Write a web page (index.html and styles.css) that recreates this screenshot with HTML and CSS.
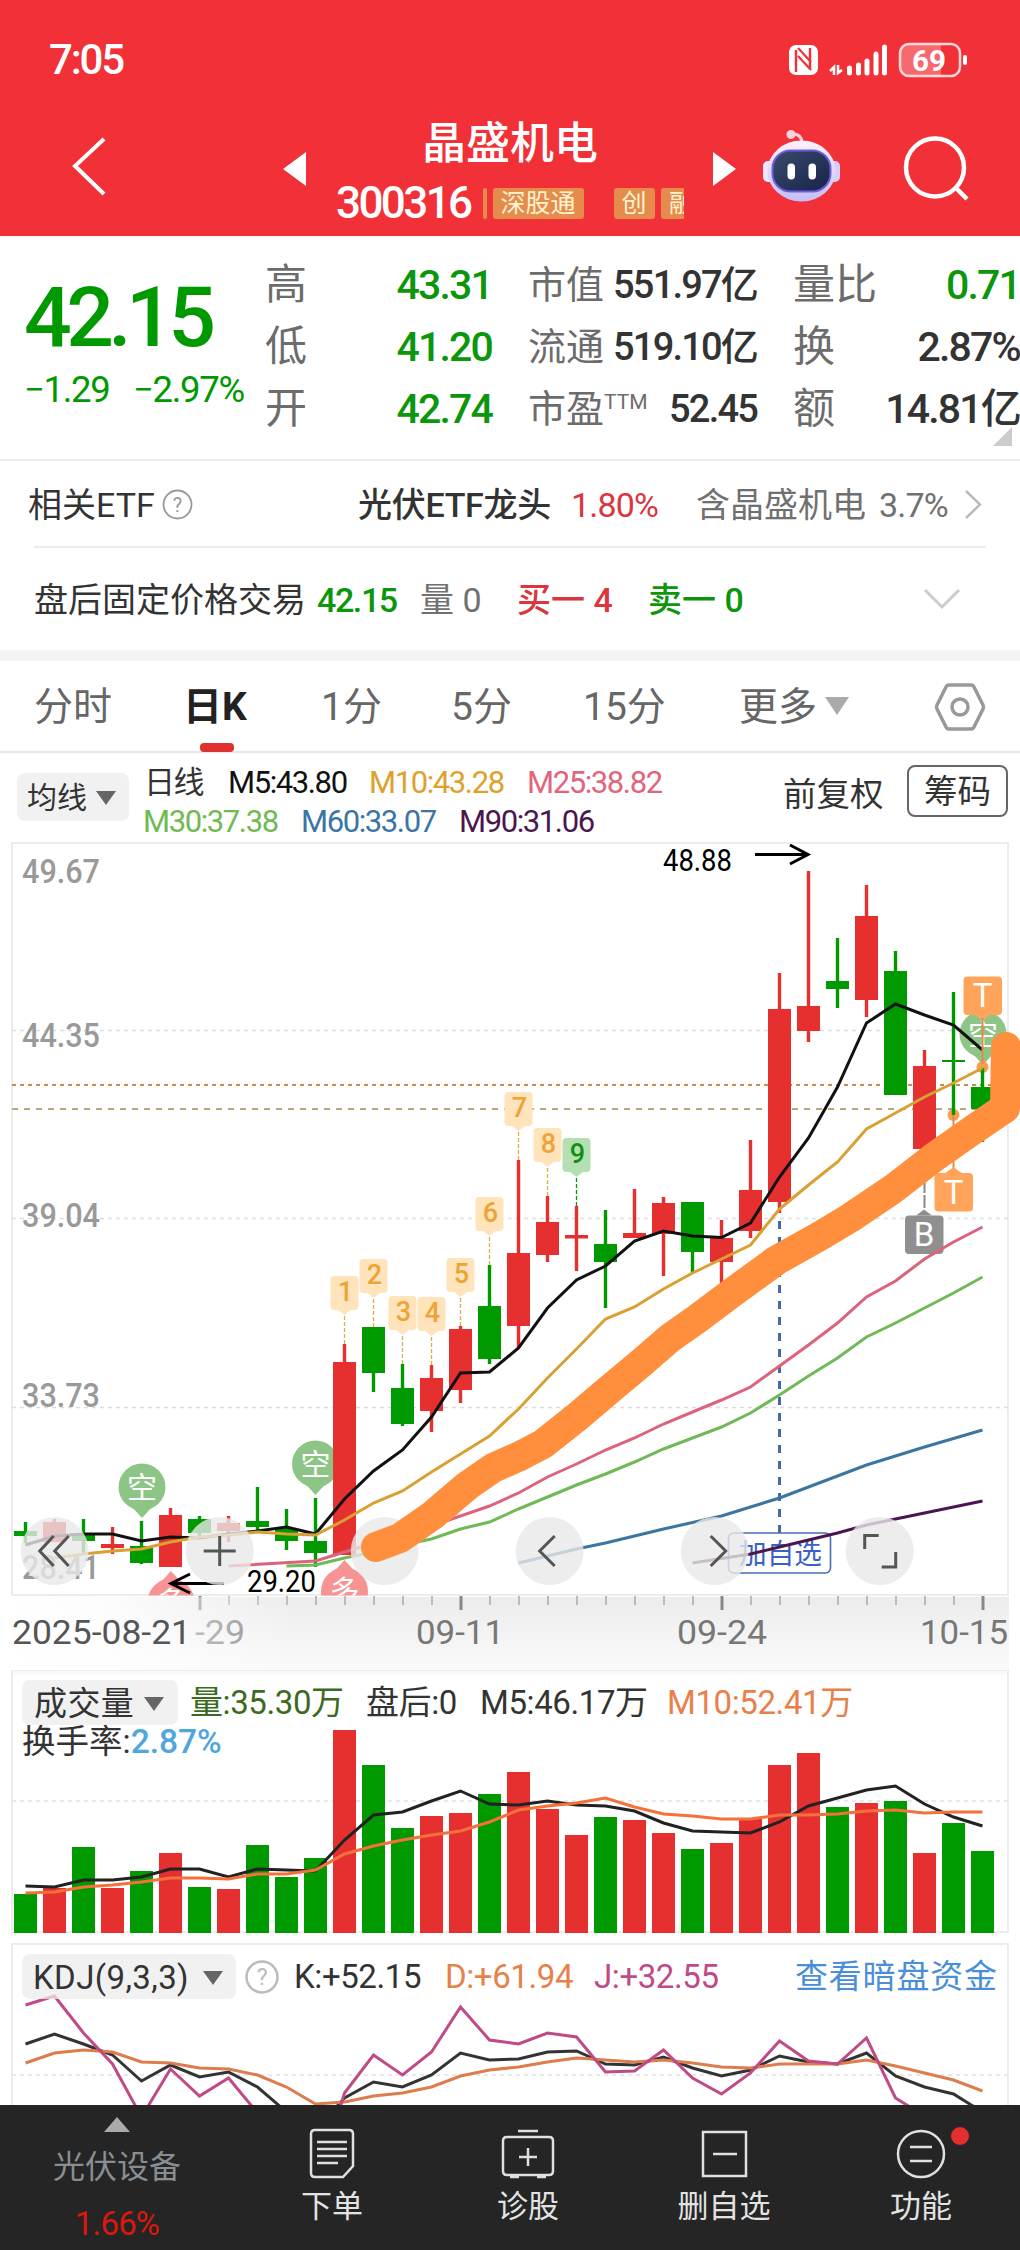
FILE: index.html
```html
<!DOCTYPE html>
<html lang="zh-CN">
<head>
    <meta charset="UTF-8">
    <meta name="viewport" content="width=device-width, initial-scale=1.0">
    <title>晶盛机电 300316</title>
    <link rel="stylesheet" href="styles.css">
</head>
<body>

    <header class="header">
        <div class="status">
            <span class="clock">7:05</span>
            <svg class="status-icons" width="182" height="38" viewBox="788 40 182 38">
                <rect x="789" y="44" width="29" height="30" rx="7" fill="#fff"/>
                <path d="M796 49v22M810 47v21" stroke="#f13037" stroke-width="2.4" fill="none"/>
                <path d="M798 47l13 14M798 55l13 14" stroke="#f13037" stroke-width="2.2" fill="none"/>
                <path d="M830 70l4-4v8M838 64v8l4-3" stroke="#fff" stroke-width="2.5" fill="none"/>
                <path d="M849.500 67v5M858.500 64v8M867 60v12M876 53v19M884.500 46v26" stroke="#fff" stroke-width="5" stroke-linecap="round"/>
                <path d="M907 43h34v32h-34q-7 0-7-7V50q0-7 7-7z" fill="#f66a6f"/>
                <rect x="900" y="43" width="60" height="32" rx="9" fill="none" stroke="#ffd9da" stroke-width="2.500"/>
                <rect x="963" y="54" width="4" height="10" rx="2" fill="#fff"/>
                <text x="912" y="70" font-size="30" font-weight="700" fill="#fff" textLength="34" lengthAdjust="spacingAndGlyphs">69</text>
            </svg>
        </div>
        <div class="titlebar">
            <svg class="back" width="36" height="62" viewBox="0 0 36 62"><path d="M33 3L4 30l29 28" fill="none" stroke="#fff" stroke-width="4"/></svg>
            <svg class="prev" width="23" height="34" viewBox="0 0 23 34"><path d="M0 17L23 0v34z" fill="#fff"/></svg>
            <div class="stock">
                <h1>晶盛机电</h1>
                <div class="code-row">
                    <span class="code">300316</span>
                    <div class="tags">
                        <i class="tag-edge"></i>
                        <span class="tag tag-wide">深股通</span>
                        <span class="tag tag-board">创</span>
                        <span class="tag tag-cut">融</span>
                    </div>
                </div>
            </div>
            <svg class="next" width="23" height="34" viewBox="0 0 23 34"><path d="M23 17L0 0v34z" fill="#fff"/></svg>
            <svg class="robot" width="78" height="74" viewBox="762 129 78 74">
                <defs>
                    <linearGradient id="shell" x1="0" y1="0" x2="0" y2="1"><stop offset="0" stop-color="#fff0fa"/><stop offset="1" stop-color="#c5bdf5"/></linearGradient>
                    <linearGradient id="face" x1="0" y1="0" x2="1" y2="1"><stop offset="0" stop-color="#3b4a6e"/><stop offset="1" stop-color="#17234a"/></linearGradient>
                </defs>
                <path d="M791 134q10-1 11 8" stroke="#fccfdc" stroke-width="3" fill="none"/>
                <circle cx="791" cy="134.500" r="4.500" fill="#fccfdc"/>
                <rect x="763" y="161" width="12" height="21" rx="5" fill="#efe6fd"/>
                <rect x="828" y="161" width="12" height="21" rx="5" fill="#d6cef8"/>
                <ellipse cx="801.500" cy="171" rx="34" ry="30.500" fill="url(#shell)"/>
                <rect x="772.500" y="150.500" width="58" height="41" rx="18" fill="url(#face)" stroke="#6b5fd8" stroke-width="2"/>
                <rect x="787.500" y="163.500" width="7.500" height="16" rx="3.700" fill="#fff"/>
                <rect x="808.500" y="163.500" width="7.500" height="16" rx="3.700" fill="#fff"/>
            </svg>
            <svg class="search" width="68" height="66" viewBox="902 135 68 66"><circle cx="935" cy="167.500" r="29" fill="none" stroke="#fff" stroke-width="4.500"/><path d="M955 187l12 12" stroke="#fff" stroke-width="4.500"/></svg>
        </div>
    </header>

    <section class="quote">
        <div class="price">
            <div class="price-now">42.15</div>
            <div class="price-diff"><span>−1.29</span><span>−2.97%</span></div>
        </div>
        <dl class="stats stats-price">
            <dt>高</dt><dd>43.31</dd>
            <dt>低</dt><dd>41.20</dd>
            <dt>开</dt><dd>42.74</dd>
        </dl>
        <dl class="stats stats-cap">
            <dt>市值</dt><dd>551.97亿</dd>
            <dt>流通</dt><dd>519.10亿</dd>
            <dt>市盈<sup>TTM</sup></dt><dd>52.45</dd>
        </dl>
        <dl class="stats stats-vol">
            <dt>量比</dt><dd class="down">0.71</dd>
            <dt>换</dt><dd>2.87%</dd>
            <dt>额</dt><dd>14.81亿</dd>
        </dl>
        <i class="corner"></i>
    </section>

    <section class="etf">
        <span>相关ETF</span>
        <svg width="31" height="31" viewBox="0 0 31 31"><circle cx="15.500" cy="15.500" r="14" fill="none" stroke="#999" stroke-width="1.800"/><text x="15.500" y="22.500" font-size="20" fill="#999" text-anchor="middle">?</text></svg>
        <b>光伏ETF龙头</b>
        <span class="up">1.80%</span>
        <span class="muted">含晶盛机电</span>
        <span class="muted num">3.7%</span>
        <svg width="20" height="31" viewBox="0 0 20 31"><path d="M2 2l14 13.500L2 29" fill="none" stroke="#bbb" stroke-width="2.500"/></svg>
    </section>

    <section class="after-hours">
        <span>盘后固定价格交易</span>
        <span class="down strong">42.15</span>
        <span class="muted">量 0</span>
        <span class="up medium">买一 4</span>
        <span class="down medium">卖一 0</span>
        <svg width="38" height="24" viewBox="0 0 38 24"><path d="M2 2l17 17L36 2" fill="none" stroke="#ccc" stroke-width="3"/></svg>
    </section>

    <nav class="tabs">
        <span>分时</span>
        <span class="active">日K</span>
        <span>1分</span>
        <span>5分</span>
        <span>15分</span>
        <span>更多<i class="caret"></i></span>
        <svg width="52" height="50" viewBox="0 0 52 50"><path d="M15 3h22q2 0 3 2l9 18q1 2 0 4l-9 18q-1 2-3 2H15q-2 0-3-2L3 27q-1-2 0-4l9-18q1-2 3-2z" fill="none" stroke="#999" stroke-width="3.500"/><circle cx="26" cy="25" r="8" fill="none" stroke="#999" stroke-width="3.500"/></svg>
    </nav>

    <section class="averages">
        <span class="pill">均线<i class="caret"></i></span>
        <div class="ma-list">
            <div class="ma-line ma-first"><span>日线</span><span class="m5">M5:43.80</span><span class="m10">M10:43.28</span><span class="m25">M25:38.82</span></div>
            <div class="ma-line ma-second"><span class="m30">M30:37.38</span><span class="m60">M60:33.07</span><span class="m90">M90:31.06</span></div>
        </div>
        <span class="adjust">前复权</span>
        <span class="chips">筹码</span>
    </section>

    <svg class="kline" id="kline" width="1020" height="828" viewBox="0 842 1020 828">
        <defs>
            <linearGradient id="axisShade" x1="0" y1="0" x2="0" y2="1"><stop offset="0" stop-color="#ececec"/><stop offset="1" stop-color="#fbfbfb"/></linearGradient>
            <linearGradient id="axisFade" x1="0" y1="0" x2="1" y2="0"><stop offset="0" stop-color="#fff"/><stop offset=".35" stop-color="#fff" stop-opacity=".85"/><stop offset="1" stop-color="#fff" stop-opacity="0"/></linearGradient>
            <clipPath id="plot"><rect x="12" y="843" width="1008" height="752.500"/></clipPath>
        </defs>
    </svg>

    <section class="panel volume">
        <svg id="volume" width="1020" height="270" viewBox="0 1670 1020 270"></svg>
        <div class="panel-head">
            <div class="legend volume-legend">
                <span class="pill">成交量<i class="caret"></i></span>
                <span class="vol-now">量:35.30万</span><span>盘后:0</span><span>M5:46.17万</span><span class="orange">M10:52.41万</span>
            </div>
            <div class="turnover">换手率:<span>2.87%</span></div>
        </div>
    </section>

    <section class="panel kdj">
        <svg id="kdj" width="1020" height="165" viewBox="0 1940 1020 165"></svg>
        <div class="panel-head">
            <div class="legend kdj-legend">
                <span class="pill">KDJ(9,3,3)<i class="caret"></i></span>
                <svg width="34" height="34" viewBox="0 0 34 34"><circle cx="17" cy="17" r="15.500" fill="none" stroke="#bbb" stroke-width="2.500"/><text x="17" y="25" font-size="23" fill="#bbb" text-anchor="middle">?</text></svg>
                <span>K:+52.15</span><span class="orange">D:+61.94</span><span class="magenta">J:+32.55</span><a class="link">查看暗盘资金</a>
            </div>
        </div>
    </section>

    <footer class="bottom-nav">
        <div class="sector">
            <i class="up-caret"></i>
            <span>光伏设备</span>
            <em>1.66%</em>
        </div>
        <div class="nav-item">
            <svg width="50" height="52" viewBox="0 0 50 52"><path d="M8 2h34q4 0 4 4v32l-10 11H8q-4 0-4-4V6q0-4 4-4zM10 14h30M10 21h30M10 28h30M10 35h21"/></svg>
            <span>下单</span>
        </div>
        <div class="nav-item">
            <svg width="54" height="52" viewBox="0 0 54 52"><path d="M17 3h20M6 9h42q4 0 4 4v30q0 4-4 4H6q-4 0-4-4V13q0-4 4-4zM27 20v18M18 29h18M9 49h9M36 49h9"/></svg>
            <span>诊股</span>
        </div>
        <div class="nav-item">
            <svg width="50" height="52" viewBox="0 0 50 52"><path d="M4 4h43v44H4zM14 26h24"/></svg>
            <span>删自选</span>
        </div>
        <div class="nav-item">
            <svg width="50" height="52" viewBox="0 0 50 52"><circle cx="25" cy="26" r="23"/><path d="M14 19h22M14 33h22"/></svg>
            <span>功能</span>
            <i class="dot"></i>
        </div>
    </footer>

    <script src="script.js"></script>
</body>
</html>
```
FILE: styles.css
```css
* {
    margin: 0;
    padding: 0;
    box-sizing: border-box;
}

body {
    width: 1020px;
    height: 2250px;
    overflow: hidden;
    background-color: #fff;
    color: #333;
    font-family: Roboto, "Noto Sans CJK SC", sans-serif;
    font-size: 34px;
    line-height: 1;
    white-space: nowrap;
}

svg {
    display: block;
    flex-shrink: 0;
}

i, em {
    font-style: normal;
}

.up {
    color: #d9363e;
}

.down {
    color: #0b960b;
}

.muted {
    color: #707070;
}

.caret {
    display: inline-block;
    border: 10px solid transparent;
    border-top: 14px solid #666;
    border-bottom: 0;
}

.pill {
    display: flex;
    align-items: center;
    background-color: #f1f1f1;
    border-radius: 8px;
}

/* header */
.header {
    height: 236px;
    background-color: #f13037;
    color: #fff;
}

.status {
    display: flex;
    justify-content: space-between;
    align-items: center;
    height: 120px;
    padding: 0 50px 0 49px;
}

.clock {
    font-size: 42px;
    font-weight: 500;
    letter-spacing: -2.2px;
}

.titlebar {
    display: grid;
    grid-template-columns: 71px 213px 52px 377px 50px 139px 118px;
    height: 116px;
}

.back {
    grid-column: 2;
    margin-top: 16px;
}

.prev {
    grid-column: 3;
    margin: 32px 0 0 -1px;
}

.stock {
    grid-column: 4;
    margin-right: 29px;
}

.stock h1 {
    padding-top: 2px;
    font-size: 44px;
    font-weight: 500;
    text-align: center;
}

.code-row {
    display: flex;
    align-items: center;
    height: 34px;
    margin-top: 20px;
}

.code {
    width: 147px;
    font-size: 44px;
    font-weight: 500;
    letter-spacing: -2.6px;
}

.tags {
    display: flex;
    width: 202px;
    overflow: hidden;
    font-size: 25px;
    line-height: 31px;
    color: #fff3d0;
}

.tag, .tag-edge {
    flex-shrink: 0;
    height: 31px;
    background-color: #e58c4c;
    border-radius: 3px;
    text-align: center;
}

.tag-edge {
    width: 4px;
    margin-right: 6px;
}

.tag-wide {
    width: 91px;
}

.tag-board {
    width: 41px;
    margin: 0 6px 0 30px;
}

.tag-cut {
    width: 42px;
}

.next {
    margin-top: 32px;
}

.robot {
    margin-top: 9px;
    margin-left: -1px;
}

.search {
    margin-top: 15px;
}

/* quote */
.quote {
    position: relative;
    display: grid;
    grid-template-columns: 241px 227px 36px 229px 36px 227px;
    height: 225px;
    padding-left: 24px;
    border-bottom: 2px solid #ebebeb;
}

.price {
    color: #009900;
}

.price-now {
    margin-top: 40px;
    font-size: 84px;
    font-weight: 500;
    letter-spacing: -5.6px;
}

.price-diff {
    display: grid;
    grid-template-columns: 109px auto;
    margin-top: 12px;
    font-size: 36.500px;
    letter-spacing: -1.3px;
}

.stats {
    display: grid;
    grid-template-columns: 84px 1fr;
    grid-auto-rows: 62px;
    align-items: center;
    margin-top: 18px;
    font-size: 42px;
}

.stats dt {
    color: #6c6c6c;
}

.stats dd {
    text-align: right;
    font-weight: 500;
    font-size: 41px;
    letter-spacing: -1.8px;
}

.stats-price {
    grid-column: 2;
}

.stats-price dd {
    color: #0b960b;
}

.stats-cap {
    grid-column: 4;
}

.stats-cap dt,
.stats-cap dd {
    font-size: 38px;
}

.stats-cap sup {
    font-size: 21px;
    vertical-align: 13px;
    line-height: 0;
}

.stats-vol {
    grid-column: 6;
}

.corner {
    position: absolute;
    right: 8px;
    bottom: 13px;
    border-left: 19px solid transparent;
    border-bottom: 19px solid #ccc;
}

/* related etf, after hours */
.etf {
    display: grid;
    grid-template-columns: 132px 197px 208px 125px 183px 89px 20px;
    align-items: center;
    height: 87px;
    margin: 0 34px;
    padding-top: 2px;
    border-bottom: 2px solid #ebebeb;
}

.etf > :first-child {
    margin-left: -6px;
}

.etf > svg {
    margin-left: -4px;
}

.etf b {
    margin-left: -5px;
    font-weight: 500;
    letter-spacing: -0.3px;
}

.etf .up,
.etf .num {
    letter-spacing: -0.8px;
}

.after-hours {
    display: grid;
    grid-template-columns: 283px 103px 97px 131px 275px 38px;
    align-items: center;
    height: 102px;
    padding: 2px 0 0 34px;
}

.strong {
    font-weight: 500;
    letter-spacing: -1.4px;
}

.medium {
    font-weight: 500;
}

/* period tabs */
.tabs {
    display: grid;
    grid-template-columns: 151px 136px 130px 132px 156px 195px 52px;
    align-items: center;
    height: 103px;
    padding: 2px 0 0 34px;
    border-top: 11px solid #f4f4f4;
    border-bottom: 2px solid #e6e6e6;
    font-size: 39px;
    color: #666;
}

.tabs .active {
    position: relative;
    margin-left: -2px;
    color: #222;
    font-weight: 700;
}

.tabs .active::after {
    content: "";
    position: absolute;
    left: 17px;
    bottom: -25px;
    width: 34px;
    height: 9px;
    border-radius: 4px;
    background-color: #e03131;
}

.tabs .caret {
    margin-left: 8px;
    border-width: 18px 12px 0;
    border-top-color: #aaa;
    vertical-align: 5px;
}

/* moving averages */
.averages {
    display: grid;
    grid-template-columns: 127px 639px 124px 96px;
    height: 89px;
    padding-left: 17px;
}

.averages .pill {
    width: 112px;
    height: 48px;
    margin-top: 20px;
    padding: 2px 0 0 10px;
    font-size: 30px;
}

.averages .caret {
    margin-left: 9px;
}

.ma-line {
    display: grid;
    height: 39px;
    align-items: center;
    font-size: 31px;
    letter-spacing: -1.400px;
}

.ma-first {
    margin-top: 10px;
    grid-template-columns: 84px 141px 158px 150px;
}

.ma-second {
    margin-left: -1px;
    grid-template-columns: 158px 158px 150px;
}

.m5 { color: #111; }
.m10 { color: #dda12c; }
.m25 { color: #e2657b; }
.m30 { color: #6fba52; }
.m60 { color: #3a75a3; }
.m90 { color: #4b1650; }

.adjust {
    margin-top: 25px;
    font-size: 33.500px;
}

.chips {
    width: 101px;
    height: 52px;
    margin-top: 12px;
    border: 2px solid #666;
    border-radius: 8px;
    font-size: 33.500px;
    line-height: 49px;
    text-align: center;
}

/* charts */
.kline text {
    font-family: Roboto, "Noto Sans CJK SC", sans-serif;
}

.axis-label {
    font-size: 34px;
    font-weight: 500;
    fill: #999;
}

.panel {
    display: grid;
}

.panel > * {
    grid-area: 1 / 1;
}

.legend {
    display: grid;
    align-items: center;
    font-size: 33px;
}

.volume-legend {
    grid-template-columns: 168px 176px 114px 187px auto;
    height: 45px;
    margin: 10px 0 0 22px;
    letter-spacing: -0.4px;
}

.volume-legend .pill {
    width: 156px;
    height: 45px;
    padding: 2px 0 0 12px;
    letter-spacing: 0.4px;
}

.volume-legend .caret {
    margin-left: 10px;
}

.kdj-legend .caret {
    margin-left: 14px;
}

.vol-now {
    color: #3c6a1e;
}

.orange {
    color: #e8804a;
}

.magenta {
    color: #c04a85;
}

.turnover {
    margin-left: 22px;
    font-size: 33.500px;
}

.turnover span {
    color: #4fa6dc;
    font-weight: 500;
}

.kdj-legend {
    grid-template-columns: 223px 49px 151px 149px 201px auto;
    height: 45px;
    margin: 14px 0 0 22px;
    letter-spacing: -0.4px;
}

.kdj-legend .pill {
    width: 214px;
    height: 45px;
    padding: 2px 0 0 11px;
    background-color: rgba(236, 236, 236, 0.75);
    letter-spacing: 0.4px;
}

.link {
    color: #4a8ed8;
    letter-spacing: 0.8px;
}

/* bottom bar */
.bottom-nav {
    display: grid;
    grid-template-columns: 234px 196px 196px 196px 198px;
    height: 145px;
    background-color: #252525;
    color: #e3e3e3;
    font-size: 31px;
}

.sector {
    display: flex;
    flex-direction: column;
    align-items: center;
    color: #888e92;
}

.sector span {
    margin-top: 19px;
    font-size: 32px;
}

.sector em {
    margin-top: 24px;
    color: #d9190f;
    font-size: 33px;
    letter-spacing: -0.8px;
}

.up-caret {
    margin-top: 12px;
    border: 13px solid transparent;
    border-top: 0;
    border-bottom: 15px solid #aaa;
}

.nav-item {
    position: relative;
    display: flex;
    flex-direction: column;
    align-items: center;
    padding-top: 23px;
}

.nav-item svg {
    fill: none;
    stroke: #e0e0e0;
    stroke-width: 2.500;
}

.nav-item span {
    margin-top: 11px;
}

.dot {
    position: absolute;
    left: 129px;
    top: 22px;
    width: 18px;
    height: 18px;
    border-radius: 50%;
    background-color: #e62e2e;
}
```
FILE: script.js
```js
const RED = '#e63030';
const GREEN = '#009900';
const STEP = 29;
const X0 = 25.5;
const x = i => X0 + STEP * i;

// [up, high, body top, body bottom, low, volume top]
const candles = [
    [0, 1522, 1531, 1536, 1543, 1894], [1, 1519, 1522, 1542, 1542, 1888], [0, 1519, 1534, 1541, 1553, 1847],
    [1, 1527, 1544, 1548, 1554, 1888], [0, 1521, 1546, 1563, 1564, 1871], [1, 1508, 1515, 1567, 1567, 1853],
    [0, 1516, 1519, 1533, 1537, 1887], [1, 1516, 1523, 1531, 1542, 1889], [0, 1487, 1521, 1527, 1533, 1845],
    [0, 1509, 1529, 1541, 1550, 1877], [0, 1498, 1541, 1553, 1567, 1858], [1, 1344, 1362, 1555, 1555, 1730],
    [0, 1327, 1327, 1373, 1392, 1765], [0, 1364, 1388, 1424, 1426, 1828], [1, 1365, 1378, 1411, 1432, 1816],
    [1, 1326, 1329, 1390, 1403, 1813], [0, 1265, 1306, 1359, 1364, 1794], [1, 1160, 1253, 1326, 1348, 1772],
    [1, 1196, 1222, 1255, 1262, 1809], [1, 1206, 1235, 1238.5, 1271, 1835], [0, 1210, 1244, 1262, 1308, 1817],
    [1, 1189, 1233, 1238, 1238, 1820], [1, 1197, 1203, 1234, 1276, 1833], [0, 1202, 1202, 1252, 1273, 1849],
    [1, 1220, 1238, 1262, 1283, 1843], [1, 1140, 1190, 1231, 1238, 1819], [1, 973, 1009, 1202, 1213, 1765],
    [1, 871, 1006, 1031, 1042, 1753], [0, 938, 981, 989, 1008, 1807], [1, 885, 916, 1000, 1017, 1803],
    [0, 951, 971, 1095, 1095, 1801], [1, 1050, 1066, 1149, 1160, 1853], [0, 992, 1060, 1062, 1115, 1823],
    [0, 1068, 1087, 1109, 1142, 1851]
];

// moving averages: [color, first index, y values (null = straight through)]
const averages = [
    ['#111', 0, [1545, 1536, 1534, 1534, 1541, 1537, 1538, 1534, 1531, 1527, 1534, 1499, 1471, 1450, 1417, 1373, 1372, 1348, 1308, 1280, 1266, 1241, 1231, 1236, 1237.5, 1223, 1177, 1138, 1087, 1023, 1004, 1015, 1025, 1050]],
    ['#d9a033', 1, [1558, 1554, 1551, 1549, 1542, 1537, 1535, 1532, 1534, 1535, 1520, 1503, 1491, 1472, 1454, 1436, 1409, 1378, 1349, 1319, 1307, 1289, 1273, 1259, 1245, 1209, 1185, 1162, 1129, 1113, 1097, 1083, 1068]],
    ['#dc637b', 7, [1566, null, null, 1561, 1552, 1543, null, 1526, null, 1506, 1493, 1477, 1464, 1450, 1438, 1424, 1412, 1400, 1387, 1366, 1345, 1323, 1297, 1281, 1259, 1242, 1227]],
    ['#70b957', 9, [1566, 1565, 1558, 1552, 1545, 1539, 1529, 1522, 1509, 1497, 1485, 1474, 1462, 1449, 1438, 1427, 1413, 1395, 1376, 1358, 1337, 1323, 1308, 1293, 1277]],
    ['#3c75a0', 17, [1563, null, 1549, 1543, null, 1529, null, 1516, 1507, 1498, 1487, 1476, 1465, null, 1447, null, 1430]],
    ['#4b1650', 23, [1563, null, 1554, 1547, 1540, 1533, 1525, null, 1513, null, 1501]]
];

const volumeM5 = [1886, 1887, 1880, 1880, 1877, 1869, 1869, 1877, 1869, 1870, 1871, 1840, 1815, 1812, 1801, 1791, 1804, 1805, 1801, 1805, 1806, 1811, 1823, 1831, 1832, 1833, 1822, 1806, 1798, 1790, 1786, 1804, 1817, 1826];
const volumeM10 = [1893, 1892, 1887, 1885, 1882, 1878, 1878, 1879, 1874, 1874, 1870, 1854, 1846, 1840, 1835, 1831, 1822, 1810, 1806, 1803, 1798, 1807, 1814, 1816, 1819, 1819, 1815, 1815, 1814, 1811, 1810, 1813, 1812, 1812];

const kdjK = [2044, 2034, 2044, 2055, 2081, 2065, 2077, 2072, 2087, 2112, 2130, 2098, 2082, 2087, 2075, 2053, 2060, 2059, 2052, 2051, 2064, 2065, 2057, 2068, 2076, 2070, 2056, 2062, 2064, 2053, 2076, 2087, 2094, 2112];
const kdjD = [2063, 2053, 2050, 2052, 2062, 2063, 2068, 2069, 2075, 2087, 2104, 2102, 2096, 2093, 2087, 2076, 2070, 2067, 2062, 2058, 2060, 2062, 2060, 2063, 2067, 2068, 2064, 2064, 2064, 2060, 2066, 2073, 2080, 2091];
const kdjJ = [2005, 1996, 2033, 2064, 2117, 2069, 2096, 2078, 2113, 2160, 2190, 2093, 2055, 2075, 2052, 2007, 2040, 2044, 2033, 2037, 2072, 2071, 2050, 2078, 2094, 2073, 2041, 2061, 2064, 2038, 2098, 2116, 2130, 2150];

// free-hand trend drawing
const trend = [[376, 1547], [400, 1538], [433, 1515], [467, 1486], [493, 1468], [520, 1456], [543, 1444], [577, 1417], [610, 1389], [640, 1364], [670, 1338], [697, 1319], [733, 1292], [777, 1260], [820, 1236], [850, 1218], [893, 1189], [933, 1158], [967, 1134], [1005, 1108], [1006, 1047]];

const rect = (rx, ry, w, h, fill, extra = '') => `<rect x="${rx}" y="${ry}" width="${w}" height="${h}" fill="${fill}" ${extra}/>`;
const path = (d, stroke, width = 3, extra = '') => `<path d="${d}" fill="none" stroke="${stroke}" stroke-width="${width}" ${extra}/>`;
const text = (tx, ty, str, width, size, fill, extra = '') =>
    `<text x="${tx}" y="${ty}" font-size="${size}" fill="${fill}" textLength="${width}" lengthAdjust="spacingAndGlyphs" ${extra}>${str}</text>`;

function line(values, color, start = 0, width = 3) {
    const points = values.map((v, i) => v === null ? '' : `${x(start + i)},${v}`).join(' ');
    return `<polyline points="${points}" fill="none" stroke="${color}" stroke-width="${width}"/>`;
}

function frame(top, height) {
    return `<rect x="12" y="${top}" width="996" height="${height}" fill="none" stroke="#ececec" stroke-width="2"/>`;
}

// round long/short signal marker
function pin(cx, cy, up, label) {
    const fill = up ? '#f79393' : '#8cc586';
    const d = up ? -1 : 1;
    return `<circle cx="${cx}" cy="${cy}" r="23.5" fill="${fill}"/>
        <path d="M${cx - 10} ${cy + 20 * d}L${cx} ${cy + 31 * d}L${cx + 10} ${cy + 20 * d}z" fill="${fill}"/>
        <text x="${cx}" y="${cy + 11}" font-size="30" fill="#fff" text-anchor="middle">${label}</text>`;
}

function tradeMark(left, top, color, label, d) {
    const cx = left + 19;
    const edge = d > 0 ? top + 38 : top;
    return rect(left, top, 38.5, 38.5, color, 'rx="4"') +
        `<path d="M${cx - 8} ${edge}L${cx} ${edge + 6 * d}L${cx + 8} ${edge}z" fill="${color}"/>
        <text x="${cx}" y="${top + 30.5}" font-size="33" fill="#fff" text-anchor="middle">${label}</text>`;
}

function drawKline() {
    let s = '';

    // date axis
    s += rect(12, 1597, 997, 78, 'url(#axisShade)');
    for (let i = 6; i < 34; i++) {
        const major = [6, 15, 24, 33].includes(i);
        s += path(`M${x(i) + 0.5} 1596v${major ? 14 : 9}`, major ? '#888' : '#bbb', major ? 3 : 2);
    }
    s += text(195, 1644, '-29', 50, 34, '#888');
    s += rect(0, 1597, 300, 73, 'url(#axisFade)');
    s += text(12, 1644, '2025-08-21', 179, 34, '#555');
    s += text(416, 1644, '09-11', 88, 34, '#777');
    s += text(677, 1644, '09-24', 90, 34, '#777');
    s += text(920, 1644, '10-15', 88, 34, '#777');

    s += frame(843, 752);
    [1030.5, 1218.5, 1407.5].forEach(y => s += path(`M12 ${y}H1008`, '#ddd', 1.3, 'stroke-dasharray="4 4"'));
    [['49.67', 883], ['44.35', 1047], ['39.04', 1227], ['33.73', 1407], ['28.41', 1579]].forEach(([t, y]) => {
        s += `<text class="axis-label" x="22" y="${y}" textLength="78" lengthAdjust="spacingAndGlyphs">${t}</text>`;
    });
    s += path('M12 1085H1008', '#c68e56', 2, 'stroke-dasharray="4 4"');
    s += path('M12 1109H1008', '#bda67f', 2, 'stroke-dasharray="6 6"');

    s += '<g clip-path="url(#plot)">';
    s += pin(142, 1487, false, '空') + pin(315.5, 1464, false, '空') + pin(983, 1034, false, '空');
    s += pin(171, 1602, true, '多') + pin(344.5, 1591, true, '多');
    s += '</g>';

    // nine-turn counters sit 68px above the high
    for (let n = 1; n <= 9; n++) {
        const i = n + 10, cx = x(i), top = candles[i][1] - 68;
        const box = n === 9 ? '#b3e0b3' : '#fee3bb';
        s += rect(cx - 14, top, 28, 34, box, 'rx="4"');
        s += `<path d="M${cx - 7} ${top + 33.5}L${cx} ${top + 39}L${cx + 7} ${top + 33.5}z" fill="${box}"/>`;
        s += path(`M${cx} ${top + 40}V${top + 68}`, n === 9 ? GREEN : '#d9b04a', 1.3, 'stroke-dasharray="4 2"');
        s += `<text x="${cx + 1}" y="${top + 25}" font-size="27" font-weight="500" fill="${n === 9 ? '#128f12' : '#eda336'}" text-anchor="middle">${n}</text>`;
    }

    s += '<circle cx="982.5" cy="1067" r="6" fill="#f7a052"/><circle cx="953.5" cy="1115" r="6" fill="#f7a052"/>';
    s += path('M953.5 1115V1170', '#e28a45', 2);
    s += path('M924.5 1180V1210', '#888', 2, 'stroke-dasharray="13 2"');
    s += tradeMark(905, 1215.5, '#8f8f8f', 'B', -1);

    candles.forEach(([up, high, top, bottom, low], i) => {
        const c = up ? RED : GREEN;
        s += rect(x(i) - 1.7, high, 3.4, low - high, c);
        s += rect(x(i) - 11.5, top, 23, bottom - top, c);
    });

    s += path('M779.5 1221V1533', '#4468b0', 3, 'stroke-dasharray="8 8"');
    s += rect(728.5, 1533, 102, 40, '#fff', 'rx="5" stroke="#4a6cb5" stroke-width="1.6"');
    s += text(739, 1564, '加自选', 83, 28, '#3a60cc');

    averages.forEach(([color, start, values]) => s += line(values, color, start));

    s += tradeMark(963.5, 976.5, '#ffa45a', 'T', 1) + path('M982.5 1018V1064', '#e28a45', 2);
    s += tradeMark(934.5, 1173, '#ffa45a', 'T', -1);

    // high and low of the visible range
    s += text(663, 871, '48.88', 69, 31, '#000');
    s += path('M755 854.5H807M790 845L808 854.5L790 864', '#000', 3);
    s += text(247, 1592, '29.20', 69, 31, '#000');
    s += path('M224 1583.500H172M190 1574L171 1583.500L190 1593', '#000', 3);

    // floating controls
    const icons = [
        'M-1 -15L-15 0L-1 15M14 -15L0 0L14 15', 'M-16 0H16M0 -15V15', '', 'M5 -15L-10 0L5 15', 'M-4 -15L11 0L-4 15',
        'M-15 -2V-15.500H-1M2 16H16V1'
    ];
    icons.forEach((d, i) => {
        s += `<g transform="translate(${54.7 + 165 * i} 1551)"><circle r="34" fill="#e9e9e9" fill-opacity=".8"/>${path(d, '#555', 3)}</g>`;
    });

    s += `<polyline points="${trend.join(' ')}" fill="none" stroke="#ff8f3c" stroke-width="30" stroke-linecap="round" stroke-linejoin="round"/>`;

    document.getElementById('kline').insertAdjacentHTML('beforeend', s);
}

function drawVolume() {
    let s = rect(12, 1670, 996, 5, '#fafafa') + frame(1670, 262);
    s += path('M12 1801H1008', '#e8e8e8', 2, 'stroke-dasharray="4 4"');
    candles.forEach((c, i) => s += rect(x(i) - 11.5, c[5], 23, 1933 - c[5], c[0] ? RED : GREEN));
    s += line(volumeM5, '#222', 0, 3) + line(volumeM10, '#f4713c', 0, 3);
    document.getElementById('volume').innerHTML = s;
}

function drawKdj() {
    let s = frame(1944, 300);
    s += path('M12 2075H1008', '#e8e8e8', 2, 'stroke-dasharray="4 4"');
    s += line(kdjK, '#333') + line(kdjD, '#dd7c4c') + line(kdjJ, '#c04a85');
    document.getElementById('kdj').innerHTML = s;
}

drawKline();
drawVolume();
drawKdj();
```
